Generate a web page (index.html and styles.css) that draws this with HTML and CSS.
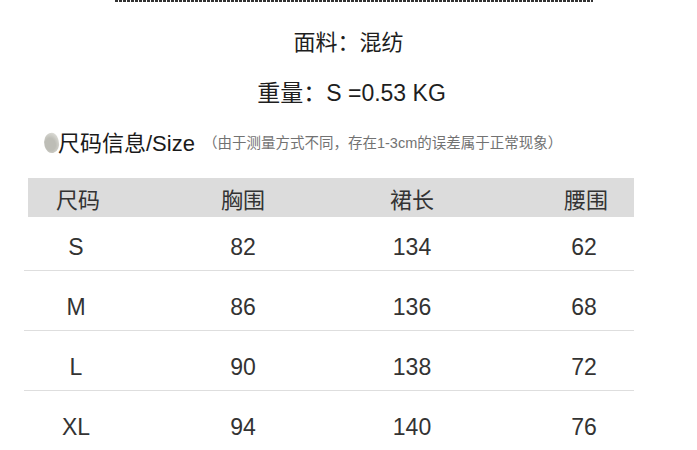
FILE: index.html
```html
<!DOCTYPE html>
<html lang="zh">
<head>
<meta charset="utf-8">
<link rel="stylesheet" href="styles.css">
</head>
<body>
<div class="page">
  <div class="dash"></div>
  <p class="info info-first">面料：混纺</p>
  <p class="info info-second">重量：S =0.53 KG</p>
  <div class="heading">
    <span class="blob"></span>
    <span class="title">尺码信息/Size</span>
    <span class="note">（由于测量方式不同，存在1-3cm的误差属于正常现象）</span>
  </div>
  <div class="table">
    <div class="thead">
      <span>尺码</span><span>胸围</span><span>裙长</span><span class="c4">腰围</span>
    </div>
    <div class="row first">
      <span>S</span><span>82</span><span>134</span><span class="c4">62</span>
    </div>
    <div class="row">
      <span>M</span><span>86</span><span>136</span><span class="c4">68</span>
    </div>
    <div class="row">
      <span>L</span><span>90</span><span>138</span><span class="c4">72</span>
    </div>
    <div class="row">
      <span>XL</span><span>94</span><span>140</span><span class="c4">76</span>
    </div>
  </div>
</div>
</body>
</html>
```

FILE: styles.css
```css
html, body {
  margin: 0;
  padding: 0;
  background: #ffffff;
}

.page {
  width: 697px;
  font-family: "Liberation Sans", "Noto Sans CJK SC", sans-serif;
  color: #222;
}

.dash {
  margin-left: 115px;
  width: 478px;
  height: 2px;
  background: repeating-linear-gradient(90deg, #333 0 3px, transparent 3px 4px);
}

.info {
  margin: 0;
  text-align: center;
  line-height: 30px;
  color: #1e1e1e;
}

.info-first {
  margin-top: 26px;
  font-size: 22px;
}

.info-second {
  margin-top: 20px;
  font-size: 23px;
  padding-left: 6px;
}

.heading {
  margin-top: 18px;
  height: 30px;
  display: flex;
  align-items: center;
  padding-left: 44px;
}

.blob {
  width: 15px;
  height: 20px;
  border-radius: 60% 40% 55% 45%;
  background: radial-gradient(ellipse at 40% 55%, #bdbdb6 0 40%, #d4d4ce 70%, #ecece8 100%);
  transform: rotate(-15deg);
  margin-right: -1px;
  margin-top: 4px;
}

.title {
  font-size: 22px;
  color: #1a1a1a;
}

.note {
  margin-left: 8px;
  font-size: 14.5px;
  color: #727272;
  margin-top: 1px;
}

.table {
  margin-top: 22px;
  margin-left: 24px;
  width: 610px;
  color: #333;
}

.thead, .row {
  display: grid;
  grid-template-columns: 104px 230px 108px 1fr;
  text-align: center;
}

.thead {
  margin-left: 4px;
  width: 606px;
  grid-template-columns: 100px 230px 108px 1fr;
  height: 39px;
  align-items: center;
  background: #dcdcdc;
  font-family: "Noto Sans CJK SC", sans-serif;
  font-size: 22px;
  line-height: 26px;
  padding-top: 1px;
  box-sizing: border-box;
}

.row {
  height: 60px;
  box-sizing: border-box;
  align-items: end;
  padding-bottom: 11px;
  border-bottom: 1px solid #dedede;
  font-size: 23px;
  line-height: 24px;
}

.row.first {
  height: 54px;
}

.c4 {
  padding-left: 68px;
}

.thead .c4 {
  padding-left: 72px;
}
```
